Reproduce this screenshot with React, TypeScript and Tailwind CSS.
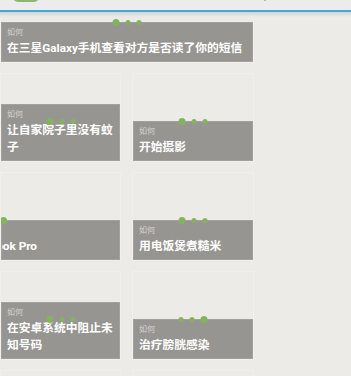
import React from "react";

type Tile = {
  title: string;
  active: number;
  span?: boolean;
  shifted?: boolean;
};

const rows: Tile[][] = [
  [{ title: "在三星Galaxy手机查看对方是否读了你的短信", active: 0, span: true }],
  [
    { title: "让自家院子里没有蚊子", active: 0 },
    { title: "开始摄影", active: 0 },
  ],
  [
    { title: "MacBook Pro", active: 2, shifted: true },
    { title: "用电饭煲煮糙米", active: 0 },
  ],
  [
    { title: "在安卓系统中阻止未知号码", active: 0 },
    { title: "治疗膀胱感染", active: 2 },
  ],
  [
    { title: "", active: -1 },
    { title: "", active: -1 },
  ],
];

function Dots({ active, shifted }: { active: number; shifted?: boolean }) {
  return (
    <div
      className={
        "absolute top-[44px] flex items-center gap-[6px] " +
        (shifted ? "left-[-23px]" : "left-1/2 -translate-x-1/2")
      }
    >
      {[0, 1, 2].map((i) => (
        <span
          key={i}
          className={
            i === active
              ? "block w-[7px] h-[7px] rounded-full bg-[#84b35e]"
              : "block w-[5px] h-[5px] rounded-full bg-[#84b35e]"
          }
        />
      ))}
    </div>
  );
}

function Cell({ tile }: { tile: Tile }) {
  return (
    <div
      className={
        "relative h-[89px] border border-[#f1efec] flex flex-col justify-end overflow-hidden " +
        (tile.span ? "col-span-2" : "")
      }
    >
      {tile.title && (
        <>
          <div className="bg-[#979592] border border-[#a3a19e] pt-[5px] pb-[4px] pl-[5px] pr-0 overflow-hidden">
            <div className={tile.shifted ? "-ml-[41px] whitespace-nowrap" : ""}>
              <div className="text-[8px] leading-[10px] text-[#d6d4d1]">如何</div>
              <div
                className={
                  "mt-[2px] text-[11.75px] leading-[17px] font-bold text-white " +
                  (tile.span ? "whitespace-nowrap" : "")
                }
              >
                {tile.title}
              </div>
            </div>
          </div>
          <Dots active={tile.active} shifted={tile.shifted} />
        </>
      )}
    </div>
  );
}

export default function App() {
  return (
    <div
      className="relative w-[351px] h-[376px] overflow-hidden bg-[#edebe7]"
      style={{ fontFamily: 'Roboto, "Noto Sans CJK SC", sans-serif' }}
    >
      <div className="mt-[-26px] w-[254px] grid grid-cols-[121px_122px] gap-x-[11px] gap-y-[10px]">
        {rows.flat().map((t, i) => (
          <Cell key={i} tile={t} />
        ))}
      </div>
      <div className="absolute left-0 top-0 w-full">
        <div className="relative h-[10px] bg-[#ececec]">
          <div className="absolute left-[13px] top-[-8px] w-[26px] h-[10px] rounded-[5px] bg-[#8cb86b]" />
          <div className="absolute left-[264px] top-0 w-[2px] h-[1px] bg-[#b5b5b5]" />
        </div>
        <div className="h-[2px] bg-[#3aaae0]" />
        <div className="h-[5px] bg-gradient-to-b from-[#d6d4d0] to-transparent" />
      </div>
    </div>
  );
}
